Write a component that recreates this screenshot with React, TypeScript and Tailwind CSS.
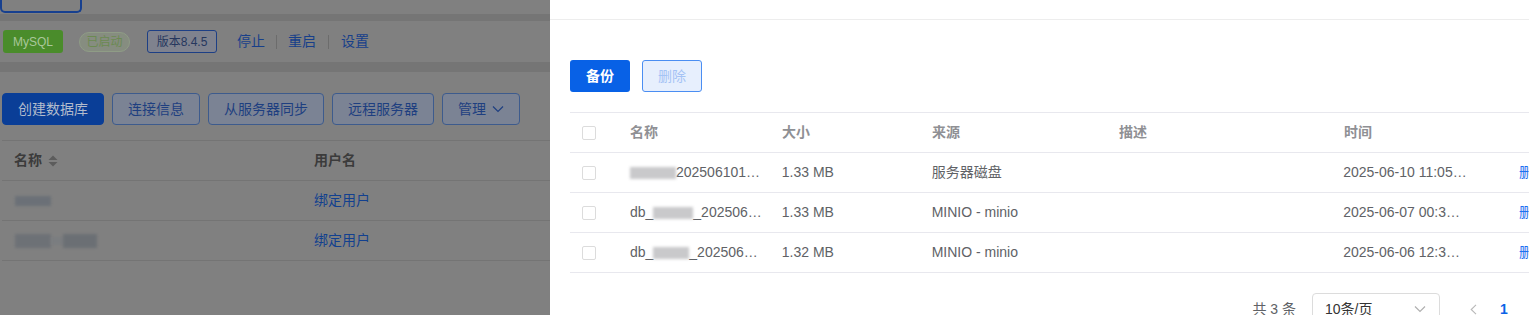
import React from "react";

const FONT = "font-['Liberation_Sans','Noto_Sans_CJK_SC',sans-serif]";

function SortIcon() {
  return (
    <svg width="10" height="12" viewBox="0 0 10 12" className="ml-[6px]">
      <path d="M5 0.5 L9.5 5 L0.5 5 Z" fill="#5c5c5c" />
      <path d="M5 11.5 L9.5 7 L0.5 7 Z" fill="#5c5c5c" />
    </svg>
  );
}

function Chevron({ className, color }: { className?: string; color: string }) {
  return (
    <svg width="12" height="8" viewBox="0 0 12 8" className={className}>
      <path d="M1 1.5 L6 6.5 L11 1.5" fill="none" stroke={color} strokeWidth="1.2" />
    </svg>
  );
}

function Blur({ w, h, color }: { w: number; h: number; color: string }) {
  return (
    <span
      className="inline-block align-middle blur-[1.5px]"
      style={{ width: w, height: h, background: color }}
    />
  );
}

function BgPage() {
  const btn =
    "h-[32px] px-[15px] rounded-[4px] border text-[14px] flex items-center whitespace-nowrap";
  return (
    <div className="flex flex-col h-full bg-[#757575]">
      {/* tabs card */}
      <div className="h-[14px] bg-[#808080] relative overflow-hidden flex">
        <div className="w-[82px] h-[13px] border-2 border-t-0 border-[#17408f] rounded-b-[5px]" />
        <span className="ml-[44px] -mt-[15px] text-[14px] leading-[17px] text-[#2a2a2a]">日志</span>
      </div>
      {/* status card */}
      <div className="mt-[7px] h-[41px] bg-[#808080] flex items-center pl-[3px]">
        <span className="h-[23px] w-[60px] flex items-center justify-center rounded-[3px] bg-[#4a8c2b] text-[12px] text-[#a9c79a]">
          MySQL
        </span>
        <span className="ml-[16px] h-[20px] w-[51px] flex items-center justify-center rounded-full bg-[#868d80] border border-[#8f9c86] text-[12px] text-[#6b8a52]">
          已启动
        </span>
        <span className="ml-[17px] h-[23px] w-[70px] flex items-center justify-center rounded-[3px] bg-[#7f828e] border border-[#1d3f85] text-[12px] text-[#26375e]">
          版本8.4.5
        </span>
        <span className="ml-[20px] text-[14px] text-[#173f8a]">停止</span>
        <span className="mx-[11px] w-px h-[14px] bg-[#6c6c6c]" />
        <span className="text-[14px] text-[#173f8a]">重启</span>
        <span className="mx-[12px] w-px h-[14px] bg-[#6c6c6c]" />
        <span className="text-[14px] text-[#173f8a]">设置</span>
      </div>
      {/* main card */}
      <div className="mt-[10px] flex-1 bg-[#808080] pt-[21px] pl-[2px]">
        <div className="flex gap-2">
          <div className={`${btn} bg-[#0a3e97] border-[#0a3e97] text-[#b3bccc]`}>创建数据库</div>
          <div className={`${btn} bg-[#7b8394] border-[#3d5b8d] text-[#1e3f80]`}>连接信息</div>
          <div className={`${btn} bg-[#7b8394] border-[#3d5b8d] text-[#1e3f80]`}>从服务器同步</div>
          <div className={`${btn} bg-[#7b8394] border-[#3d5b8d] text-[#1e3f80]`}>远程服务器</div>
          <div className={`${btn} bg-[#7b8394] border-[#3d5b8d] text-[#1e3f80]`}>
            管理
            <Chevron className="ml-[6px]" color="#1e3f80" />
          </div>
        </div>
        <div className="mt-[15px] border-t border-[#747474]">
          <div className="h-[40px] border-b border-[#747474] flex items-center text-[14px] font-semibold text-[#3b3b3b]">
            <div className="w-[300px] pl-[12px] flex items-center">
              名称
              <SortIcon />
            </div>
            <div className="pl-[12px]">用户名</div>
          </div>
          <div className="h-[40px] border-b border-[#747474] flex items-center text-[14px]">
            <div className="w-[300px] pl-[13px] flex items-center">
              <Blur w={36} h={10} color="#6b7077" />
            </div>
            <div className="pl-[12px] text-[#12408f]">绑定用户</div>
          </div>
          <div className="h-[40px] border-b border-[#747474] flex items-center text-[14px]">
            <div className="w-[300px] pl-[13px] flex items-center">
              <Blur w={36} h={14} color="#6d7176" />
              <Blur w={12} h={8} color="#7a7d80" />
              <Blur w={34} h={14} color="#6b6f74" />
            </div>
            <div className="pl-[12px] text-[#12408f]">绑定用户</div>
          </div>
        </div>
      </div>
    </div>
  );
}

const rows = [
  {
    pre: null as null | string,
    blurW: 46,
    post: "202506101…",
    size: "1.33 MB",
    src: "服务器磁盘",
    time: "2025-06-10 11:05…",
  },
  { pre: "db_", blurW: 40, post: "_202506…", size: "1.33 MB", src: "MINIO - minio", time: "2025-06-07 00:3…" },
  { pre: "db_", blurW: 36, post: "_202506…", size: "1.32 MB", src: "MINIO - minio", time: "2025-06-06 12:3…" },
];

function Checkbox() {
  return <span className="block w-[14px] h-[14px] rounded-[2px] border border-[#dcdcdc] bg-white" />;
}

function Drawer() {
  const cols = ["w-[48px]", "w-[152px]", "w-[150px]", "w-[187px]", "w-[225px]", "w-[176px]"];
  return (
    <div className="absolute top-0 left-[550px] h-full w-[1017px] bg-white flex flex-col">
      <div className="h-[20px] border-b border-[#ededed] overflow-hidden relative shrink-0">
        <div className="-mt-[17px] flex items-start text-[16px] leading-[20px] font-semibold text-[#303030] whitespace-nowrap">
          <span className="ml-[86px] text-[#c8c8c8] font-normal">、</span>
          <span className="ml-[50px]">的备份列表</span>
        </div>
      </div>
      <div className="px-[20px] pt-[40px]">
        <div className="flex gap-[12px]">
          <div className="w-[60px] h-[32px] rounded-[3px] bg-[#0861e6] text-white text-[14px] font-semibold flex items-center justify-center">
            备份
          </div>
          <div className="w-[60px] h-[32px] rounded-[3px] bg-[#e7effd] border border-[#4b8ef2] text-[#a5c3f5] text-[14px] flex items-center justify-center">
            删除
          </div>
        </div>
        <div className="mt-[20px] border-t border-[#e8e8ee] text-[14px]">
          <div className="h-[40px] border-b border-[#e8e8ee] flex items-center font-semibold text-[#8f9094]">
            <div className={`${cols[0]} pl-[12px]`}>
              <Checkbox />
            </div>
            <div className={`${cols[1]} pl-[12px]`}>名称</div>
            <div className={`${cols[2]} pl-[12px]`}>大小</div>
            <div className={`${cols[3]} pl-[12px]`}>来源</div>
            <div className={`${cols[4]} pl-[12px]`}>描述</div>
            <div className={`${cols[5]} pl-[12px]`}>时间</div>
            <div className="pl-[12px]" />
          </div>
          {rows.map((r, i) => (
            <div key={i} className="h-[40px] border-b border-[#e8e8ee] flex items-center text-[#606266]">
              <div className={`${cols[0]} pl-[12px]`}>
                <Checkbox />
              </div>
              <div className={`${cols[1]} pl-[12px] flex items-center whitespace-nowrap`}>
                {r.pre && <span>{r.pre}</span>}
                <Blur w={r.blurW} h={12} color="#c9c9cb" />
                <span>{r.post}</span>
              </div>
              <div className={`${cols[2]} pl-[12px] whitespace-nowrap`}>{r.size}</div>
              <div className={`${cols[3]} pl-[12px] whitespace-nowrap`}>{r.src}</div>
              <div className={`${cols[4]} pl-[12px]`} />
              <div className={`${cols[5]} pl-[12px] whitespace-nowrap`}>{r.time}</div>
              <div className="pl-[12px] text-[#1e6ef0] whitespace-nowrap">删除</div>
            </div>
          ))}
        </div>
        <div className="mt-[20px] flex items-center justify-end text-[14px]">
          <span className="text-[#606266] whitespace-nowrap">共 3 条</span>
          <div className="ml-[16px] w-[128px] h-[32px] rounded-[4px] border border-[#dcdcdc] flex items-center justify-between pl-[12px] pr-[13px] text-[#333]">
            <span>10条/页</span>
            <Chevron color="#b0b0b0" />
          </div>
          <div className="ml-[21px] w-[24px] h-[24px] flex items-center justify-center">
            <svg width="7" height="11" viewBox="0 0 7 11">
              <path d="M6 0.8 L1.2 5.5 L6 10.2" fill="none" stroke="#b8b8b8" strokeWidth="1.1" />
            </svg>
          </div>
          <div className="ml-[7px] w-[24px] h-[24px] flex items-center justify-center text-[#0b63e6] font-semibold">1</div>
          <div className="ml-[7px] w-[24px] h-[24px] flex items-center justify-center">
            <svg width="7" height="11" viewBox="0 0 7 11">
              <path d="M1 0.8 L5.8 5.5 L1 10.2" fill="none" stroke="#b8b8b8" strokeWidth="1.1" />
            </svg>
          </div>
        </div>
      </div>
    </div>
  );
}

export default function App() {
  return (
    <div className={`relative w-[1529px] h-[315px] overflow-hidden ${FONT}`}>
      <BgPage />
      <Drawer />
    </div>
  );
}
